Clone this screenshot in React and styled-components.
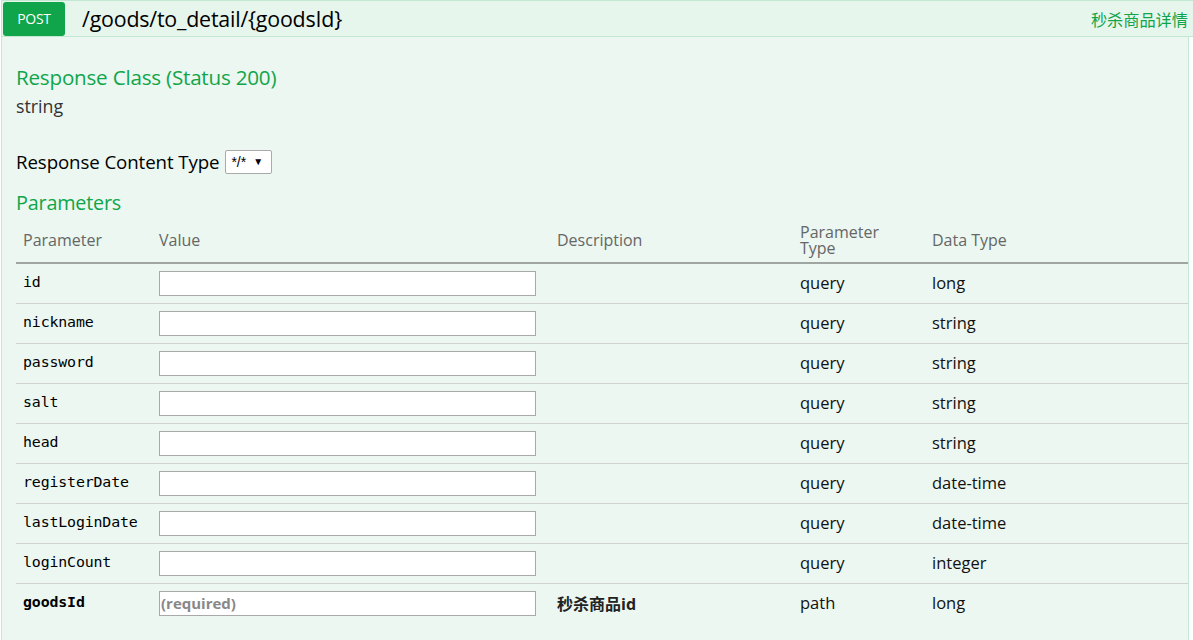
import React from "react";
import styled, { createGlobalStyle } from "styled-components";

const GlobalStyle = createGlobalStyle`
  html, body { margin: 0; padding: 0; background: #ffffff; }
  body { font-family: "Open Sans", "Noto Sans CJK SC", sans-serif; }
`;

const Operation = styled.div`
  margin-left: 1px;
  width: 1200px;
`;

const Heading = styled.div`
  display: flex;
  align-items: center;
  height: 35px;
  background: #e7f6ec;
  border: 1px solid #c3e8d1;
  padding-left: 1px;
`;

const Method = styled.span`
  display: flex;
  align-items: center;
  justify-content: center;
  width: 62px;
  height: 34px;
  background: #10a54a;
  color: #ffffff;
  font-size: 14px;
  border-radius: 3px;
  letter-spacing: -0.3px;
`;

const Path = styled.span`
  margin-left: 17px;
  font-size: 21.4px;
  color: #000;
  flex: 1;
  letter-spacing: -0.2px;
`;

const Summary = styled.span`
  font-size: 16.2px;
  color: #10a54a;
  margin-right: 12px;
`;

const Content = styled.div`
  background: #ebf7f0;
  border: 1px solid #c3e8d1;
  border-top: none;
  padding: 28px 0 40px 14px;
  width: 1172px;
`;

const SectionTitle = styled.h4`
  margin: ${(p) => p.$top || 0}px 0 0;
  font-size: ${(p) => p.$size || 20.6}px;
  font-weight: normal;
  color: #10a54a;
  line-height: 24px;
  letter-spacing: -0.2px;
`;

const Model = styled.div`
  font-size: 17.8px;
  color: #333;
  line-height: 22px;
  margin-top: 6px;
`;

const ContentTypeRow = styled.div`
  display: flex;
  align-items: center;
  gap: 6px;
  margin-top: 32px;
  font-size: 18.7px;
  color: #000;
  letter-spacing: -0.1px;
`;

const SelectBox = styled.span`
  display: inline-flex;
  align-items: center;
  gap: 7px;
  box-sizing: border-box;
  width: 47px;
  height: 24px;
  padding: 0 0 0 5px;
  background: #fff;
  border: 1px solid #aaa;
  border-radius: 2px;
  font-family: "Liberation Sans", sans-serif;
  font-size: 14px;
  color: #000;
  letter-spacing: 0;
`;

const Caret = styled.span`
  font-size: 10px;
`;

const Table = styled.table`
  border-collapse: collapse;
  table-layout: fixed;
  width: 1172px;
  margin-top: 4px;
`;

const HeadCell = styled.th`
  text-align: left;
  font-weight: normal;
  color: #666;
  font-size: 16px;
  line-height: 16px;
  padding: 5px 0 6px 7px;
  height: 32px;
  vertical-align: middle;
  border-bottom: 2px solid #9fa5a1;
`;

const Row = styled.tr`
  border-bottom: 1px solid #cfd3d0;
  &:last-child { border-bottom: none; }
`;

const Cell = styled.td`
  height: 37px;
  padding: 0 0 2px 7px;
  vertical-align: middle;
  font-size: 16.5px;
  color: #111;
  font-weight: ${(p) => (p.$bold ? "bold" : "normal")};
`;

const CodeCell = styled(Cell)`
  font-family: "DejaVu Sans Mono", monospace;
  font-size: 14.9px;
  letter-spacing: -0.15px;
  color: #000;
  height: 35px;
  padding-bottom: 4px;
`;

const ValueInput = styled.input`
  display: block;
  box-sizing: border-box;
  width: 377px;
  height: 25px;
  margin-top: 1px;
  border: 1px solid #a9a9a9;
  background: #fff;
  padding: 0 1px;
  font-family: "Open Sans", sans-serif;
  font-size: 15px;
  &::placeholder { color: #888; font-weight: bold; }
  outline: none;
`;

const DescText = styled.span`
  font-weight: bold;
  font-size: 16px;
  color: #222;
`;

const params = [
  { name: "id", type: "query", data: "long" },
  { name: "nickname", type: "query", data: "string" },
  { name: "password", type: "query", data: "string" },
  { name: "salt", type: "query", data: "string" },
  { name: "head", type: "query", data: "string" },
  { name: "registerDate", type: "query", data: "date-time" },
  { name: "lastLoginDate", type: "query", data: "date-time" },
  { name: "loginCount", type: "query", data: "integer" },
  { name: "goodsId", type: "path", data: "long", required: true, desc: "秒杀商品id" },
];

export default function App() {
  return (
    <>
      <GlobalStyle />
      <Operation>
        <Heading>
          <Method>POST</Method>
          <Path>/goods/to_detail/{"{goodsId}"}</Path>
          <Summary>秒杀商品详情</Summary>
        </Heading>
        <Content>
          <SectionTitle>Response Class (Status 200)</SectionTitle>
          <Model>string</Model>
          <ContentTypeRow>
            <span>Response Content Type</span>
            <SelectBox>
              */* <Caret>▼</Caret>
            </SelectBox>
          </ContentTypeRow>
          <SectionTitle $top={17} $size={19.8}>Parameters</SectionTitle>
          <Table>
            <colgroup>
              <col style={{ width: 136 }} />
              <col style={{ width: 398 }} />
              <col style={{ width: 243 }} />
              <col style={{ width: 132 }} />
              <col style={{ width: 263 }} />
            </colgroup>
            <thead>
              <tr>
                <HeadCell>Parameter</HeadCell>
                <HeadCell>Value</HeadCell>
                <HeadCell>Description</HeadCell>
                <HeadCell>
                  Parameter
                  <br />
                  Type
                </HeadCell>
                <HeadCell>Data Type</HeadCell>
              </tr>
            </thead>
            <tbody>
              {params.map((p) => (
                <Row key={p.name}>
                  <CodeCell $bold={p.required}>{p.name}</CodeCell>
                  <Cell>
                    <ValueInput placeholder={p.required ? "(required)" : ""} />
                  </Cell>
                  <Cell>{p.desc ? <DescText>{p.desc}</DescText> : null}</Cell>
                  <Cell>{p.type}</Cell>
                  <Cell>{p.data}</Cell>
                </Row>
              ))}
            </tbody>
          </Table>
        </Content>
      </Operation>
    </>
  );
}
